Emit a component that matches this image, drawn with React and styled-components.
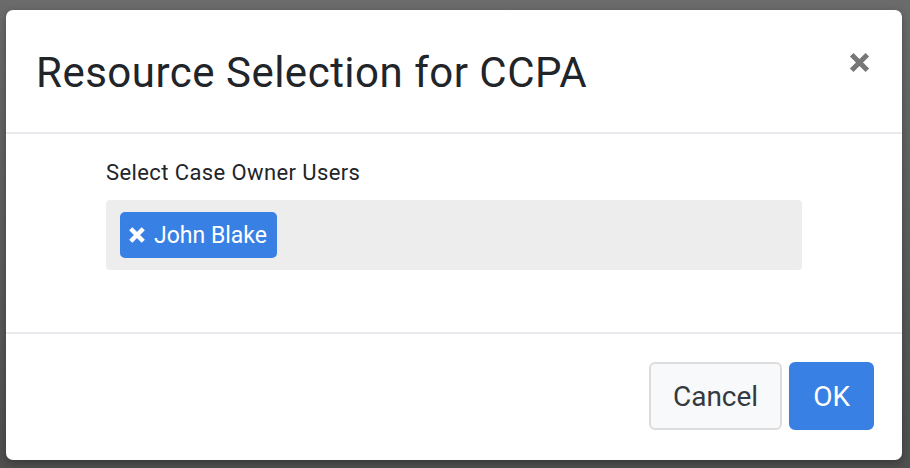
import React from 'react';
import styled, { createGlobalStyle } from 'styled-components';

const GlobalStyle = createGlobalStyle`
    html, body {
        margin: 0;
        padding: 0;
        background: #5b5b5b;
        font-family: Roboto, "Liberation Sans", sans-serif;
    }
`;

const Backdrop = styled.div`
    width: 910px;
    height: 468px;
    background: linear-gradient(#6b6b6b, #4f4f4f);
    padding: 10px 8px 8px 6px;
    box-sizing: border-box;
    overflow: hidden;
`;

const Modal = styled.div`
    width: 896px;
    height: 450px;
    background: #fff;
    border-radius: 7px;
    display: flex;
    flex-direction: column;
    box-shadow: 0 3px 9px rgba(0, 0, 0, 0.3);
`;

const Header = styled.div`
    height: 124px;
    flex-shrink: 0;
    display: flex;
    align-items: flex-start;
    justify-content: space-between;
    padding: 0 30px 0 30px;
    border-bottom: 2px solid #e9e9ee;
    box-sizing: border-box;
`;

const Title = styled.h4`
    margin: 38px 0 0;
    font-size: 42px;
    font-weight: 400;
    color: #212529;
    line-height: 1.2;
    letter-spacing: 0.5px;
`;

const CloseButton = styled.button`
    margin-top: 40px;
    border: none;
    background: none;
    padding: 0;
    color: #777;
    cursor: pointer;
    display: flex;
`;

const Body = styled.div`
    flex: 1;
    padding: 26px 100px 0 100px;
    border-bottom: 2px solid #e9e9ee;
`;

const Label = styled.div`
    font-size: 22px;
    color: #212529;
    line-height: 26px;
    margin-bottom: 14px;
    letter-spacing: 0.4px;
`;

const TagBox = styled.div`
    background: #ededed;
    border-radius: 4px;
    height: 70px;
    padding: 12px 14px;
    box-sizing: border-box;
    display: flex;
    gap: 8px;
`;

const Tag = styled.span`
    display: inline-flex;
    align-items: center;
    gap: 7px;
    background: #3880e4;
    color: #fff;
    border-radius: 5px;
    padding: 0 10px 0 7px;
    font-size: 23px;
    height: 46px;
`;

const Footer = styled.div`
    height: 126px;
    flex-shrink: 0;
    display: flex;
    justify-content: flex-end;
    align-items: flex-start;
    gap: 7px;
    padding: 28px 28px 0 0;
    box-sizing: border-box;
`;

const Button = styled.button`
    height: 68px;
    border-radius: 6px;
    font-family: inherit;
    font-size: 28px;
    padding: 0 22px;
    cursor: pointer;
    background: ${({ $primary }) => ($primary ? '#3880e4' : '#f8f9fa')};
    color: ${({ $primary }) => ($primary ? '#fff' : '#343a40')};
    border: 2px solid ${({ $primary }) => ($primary ? '#3880e4' : '#dcdcdc')};
`;

const Cross = ({ size, stroke }) => (
    <svg width={size} height={size} viewBox="0 0 16 16">
        <path d="M3 3 L13 13 M13 3 L3 13" stroke="currentColor" strokeWidth={stroke} strokeLinecap="butt" />
    </svg>
);

export default function App() {
    return (
        <Backdrop>
            <GlobalStyle />
            <Modal>
                <Header>
                    <Title>Resource Selection for CCPA</Title>
                    <CloseButton>
                        <Cross size={25} stroke={3.2} />
                    </CloseButton>
                </Header>
                <Body>
                    <Label>Select Case Owner Users</Label>
                    <TagBox>
                        <Tag>
                            <Cross size={20} stroke={3.6} />
                            John Blake
                        </Tag>
                    </TagBox>
                </Body>
                <Footer>
                    <Button>Cancel</Button>
                    <Button $primary>OK</Button>
                </Footer>
            </Modal>
        </Backdrop>
    );
}
